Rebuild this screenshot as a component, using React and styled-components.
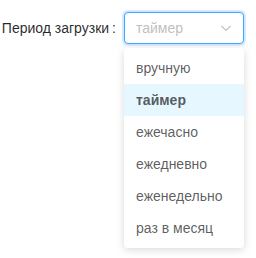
import React from "react";
import styled, { createGlobalStyle } from "styled-components";

const Global = createGlobalStyle`
  html, body { margin: 0; padding: 0; background: #fff; }
  html, body, #root { min-height: 100vh; }
  body {
    font-family: "Liberation Sans", Arial, sans-serif;
    font-size: 14px;
    color: rgba(0,0,0,.65);
  }
`;

const Row = styled.div`
  display: flex;
  align-items: center;
  padding: 12px 0 0 0;
`;

const Label = styled.label`
  box-sizing: border-box;
  width: 124px;
  text-align: right;
  font-size: 14px;
  line-height: 32px;
  color: rgba(0,0,0,.85);
  white-space: nowrap;
  &::after {
    content: ":";
    margin: 0 8px 0 3px;
  }
`;

const SelectWrap = styled.div`
  position: relative;
  width: 120px;
`;

const Selection = styled.div`
  box-sizing: border-box;
  height: 32px;
  border: 1px solid #40a9ff;
  border-radius: 4px;
  box-shadow: 0 0 0 2px rgba(24,144,255,.2);
  display: flex;
  align-items: center;
  padding: 0 11px;
  background: #fff;
`;

const Placeholder = styled.span`
  flex: 1;
  color: #bfbfbf;
  line-height: 22px;
`;

const Arrow = styled.svg`
  width: 12px;
  height: 12px;
  color: rgba(0,0,0,.25);
`;

const Dropdown = styled.ul`
  position: absolute;
  top: calc(100% + 4px);
  left: 0;
  width: 120px;
  margin: 0;
  padding: 4px 0;
  list-style: none;
  background: #fff;
  border-radius: 4px;
  box-shadow: 0 2px 8px rgba(0,0,0,.15);
  z-index: 10;
`;

const Item = styled.li`
  padding: 5px 12px;
  line-height: 22px;
  color: rgba(0,0,0,.65);
  font-weight: ${p => (p.$selected ? 600 : 400)};
  background: ${p => (p.$selected ? "#e6f7ff" : "transparent")};
  white-space: nowrap;
`;

const options = ["вручную", "таймер", "ежечасно", "ежедневно", "еженедельно", "раз в месяц"];

export default function App() {
  return (
    <>
      <Global />
      <Row>
        <Label>Период загрузки</Label>
        <SelectWrap>
          <Selection>
            <Placeholder>таймер</Placeholder>
            <Arrow viewBox="0 0 12 12" fill="none" stroke="currentColor" strokeWidth="1.1">
              <path d="M1.5 4 L6 8.5 L10.5 4" />
            </Arrow>
          </Selection>
          <Dropdown>
            {options.map(o => (
              <Item key={o} $selected={o === "таймер"}>{o}</Item>
            ))}
          </Dropdown>
        </SelectWrap>
      </Row>
    </>
  );
}
